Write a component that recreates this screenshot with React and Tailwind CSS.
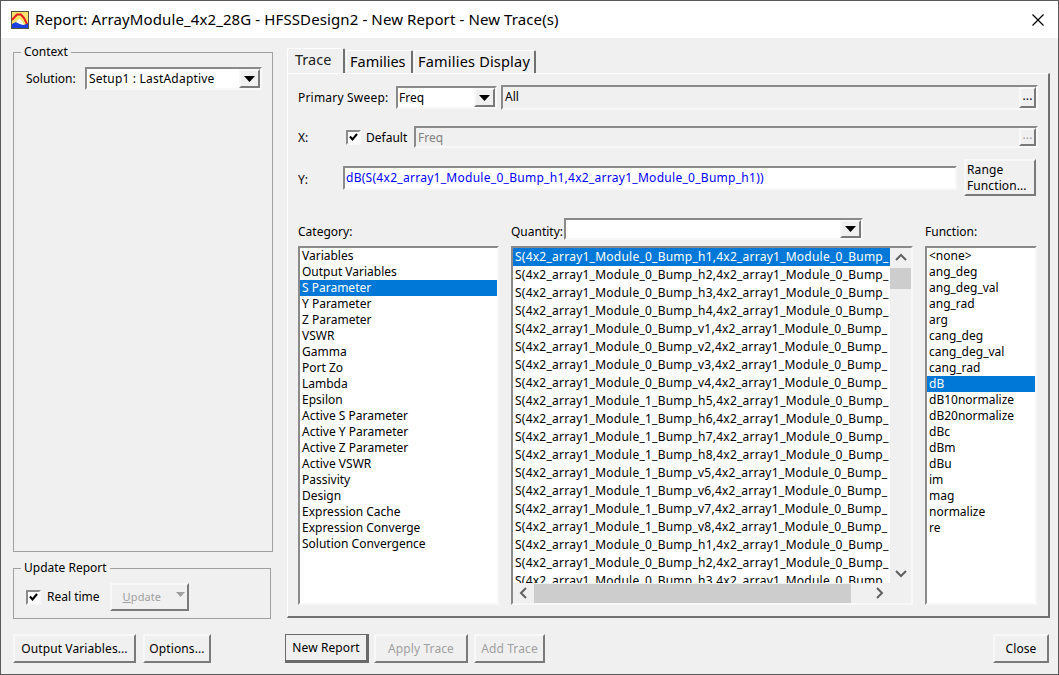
import React from "react";

const sunken = "border-2 border-t-[#8a8a8a] border-l-[#8a8a8a] border-r-[#f8f8f8] border-b-[#f8f8f8]";
const raised = "border-2 border-t-[#f8f8f8] border-l-[#f8f8f8] border-r-[#7a7a7a] border-b-[#7a7a7a] bg-[#f0f0f0]";

const categories = [
  "Variables", "Output Variables", "S Parameter", "Y Parameter", "Z Parameter", "VSWR", "Gamma", "Port Zo",
  "Lambda", "Epsilon", "Active S Parameter", "Active Y Parameter", "Active Z Parameter", "Active VSWR",
  "Passivity", "Design", "Expression Cache", "Expression Converge", "Solution Convergence",
];

const functions = [
  "<none>", "ang_deg", "ang_deg_val", "ang_rad", "arg", "cang_deg", "cang_deg_val", "cang_rad", "dB",
  "dB10normalize", "dB20normalize", "dBc", "dBm", "dBu", "im", "mag", "normalize", "re",
];

const ports = [
  "0_Bump_h1", "0_Bump_h2", "0_Bump_h3", "0_Bump_h4", "0_Bump_v1", "0_Bump_v2", "0_Bump_v3", "0_Bump_v4",
  "1_Bump_h5", "1_Bump_h6", "1_Bump_h7", "1_Bump_h8", "1_Bump_v5", "1_Bump_v6", "1_Bump_v7", "1_Bump_v8",
  "0_Bump_h1", "0_Bump_h2", "0_Bump_h3",
];

function Caret({ muted }) {
  return (
    <svg width={muted ? 9 : 11} height={muted ? 5 : 6} viewBox="0 0 11 6">
      <path d="M0 0H11L5.5 6Z" fill={muted ? "#a0a0a0" : "#000"} />
    </svg>
  );
}

function Combo({ value, className, textClass = "" }) {
  return (
    <div className={`${sunken} flex items-center bg-white ${className}`}>
      <span className={`flex-1 pl-[1px] leading-none ${textClass}`}>{value}</span>
      <div className={`${raised} flex h-full w-[21px] items-center justify-center`}>
        <Caret />
      </div>
    </div>
  );
}

function Check() {
  return (
    <div className={`${sunken} flex h-[15px] w-[15px] items-center justify-center bg-white`}>
      <svg width="9" height="8" viewBox="0 0 9 8">
        <path d="M1 3.5L3.5 6.5L8 1" fill="none" stroke="#000" strokeWidth="2" />
      </svg>
    </div>
  );
}

function Button({ children, className = "", disabled }) {
  return (
    <button className={`${raised} flex items-center justify-center tracking-[0.1px] ${disabled ? "text-[#a0a0a0]" : "text-black"} ${className}`}>
      {children}
    </button>
  );
}

function Chevron({ d }) {
  return (
    <svg width="12" height="12" viewBox="0 0 12 12">
      <path d={d} fill="none" stroke="#606060" strokeWidth="2" />
    </svg>
  );
}

function Group({ title, className, children }) {
  return (
    <div className={`relative border border-[#a0a0a0] ${className}`}>
      <span className="absolute left-[7px] top-[-9px] bg-[#f0f0f0] px-[3px] leading-[16px]">{title}</span>
      {children}
    </div>
  );
}

function Tab({ label, className }) {
  return (
    <div className={`flex items-center rounded-t-[2px] border-t border-l border-r-2 border-t-white border-l-white border-r-[#707070] ${className}`}>
      {label}
    </div>
  );
}

export default function App() {
  return (
    <div className="flex h-[675px] w-[1059px] flex-col overflow-hidden border border-[#5a5a5a] bg-[#f0f0f0] font-['Noto_Sans',sans-serif] text-[12px] text-black">
      {/* Title bar */}
      <div className="flex h-[37px] shrink-0 items-center bg-white pl-[10px] pr-[14px]">
        <svg width="18" height="18" viewBox="0 0 18 18">
          <rect width="18" height="18" fill="#55533f" />
          <rect x="1" y="1" width="16" height="16" fill="#f8e46c" />
          <path d="M1 13L5 11L9 13L13 14L17 12V17H1Z" fill="#1c3fe0" />
          <path d="M5 11L8 8L11 10L13 14L9 13Z" fill="#fff" />
          <path d="M1 9L6 3.5L10 3.5L13 7L16 13" fill="none" stroke="#e61e1e" strokeWidth="2" />
        </svg>
        <span className="ml-[6px] flex-1 text-[15px] tracking-[0.11px]">
          Report: ArrayModule_4x2_28G - HFSSDesign2 - New Report - New Trace(s)
        </span>
        <svg width="12" height="12" viewBox="0 0 12 12">
          <path d="M0.5 0.5L11.5 11.5M11.5 0.5L0.5 11.5" stroke="#000" strokeWidth="1.2" />
        </svg>
      </div>

      <div className="flex">
        {/* Left column */}
        <div className="ml-[12px] mt-[14px] flex w-[260px] flex-col">
          <Group title="Context" className="h-[500px]">
            <div className="mt-[14px] flex items-center pl-[12px]">
              <span className="w-[59px]">Solution:</span>
              <Combo value="Setup1 : LastAdaptive" textClass="pl-[2px] tracking-[0.2px]" className="h-[23px] w-[177px]" />
            </div>
          </Group>
          <Group title="Update Report" className="mt-[16px] h-[51px] w-[258px]">
            <div className="mt-[14px] flex items-center pl-[12px]">
              <Check />
              <span className="ml-[6px]">Real time</span>
              <Button disabled className="ml-[10px] h-[28px] w-[79px] !justify-start pl-[11px] text-[11px]">
                <span className="underline">U</span>
                <span>pdate</span>
                <span className="mb-[5px] ml-[15px]"><Caret muted /></span>
              </Button>
            </div>
          </Group>
        </div>

        {/* Tabs */}
        <div className="ml-[14px] mt-[10px] flex w-[763px] flex-col">
          <div className="flex h-[25px] items-end text-[14.5px]">
            <Tab label="Trace" className="h-[25px] w-[58px] pb-[2px] pl-[7px] text-[#222]" />
            <Tab label="Families" className="ml-[1px] h-[23px] w-[67px] pl-[3px]" />
            <Tab label="Families Display" className="ml-[1px] h-[23px] w-[122px] pl-[3px] tracking-[0.2px]" />
          </div>
          <div className="h-[545px] border-t border-l border-r-2 border-b-2 border-t-white border-l-white border-r-[#707070] border-b-[#707070] pl-[10px]">
            {/* Primary sweep */}
            <div className="mt-[11px] flex h-[25px] items-center">
              <span className="w-[98px] tracking-[0.2px]">Primary Sweep:</span>
              <Combo value="Freq" className="h-[23px] w-[101px]" />
              <div className={`${sunken} ml-[4px] flex h-[25px] w-[537px] items-center`}>
                <span className="flex-1 pb-[2px] pl-[2px]">All</span>
                <Button className="h-[21px] w-[17px] pb-[4px] text-[#0000ff]">...</Button>
              </div>
            </div>
            {/* X */}
            <div className="mt-[16px] flex h-[22px] items-center">
              <span className="w-[48px] pt-[2px]">X:</span>
              <Check />
              <span className="ml-[5px] w-[48px] pt-[2px]">Default</span>
              <div className={`${sunken} flex h-[22px] w-[624px] items-center text-[#808080]`}>
                <span className="flex-1 pl-[2px] pt-[2px]">Freq</span>
                <Button disabled className="h-[18px] w-[17px] pb-[4px]">...</Button>
              </div>
            </div>
            {/* Y */}
            <div className="mt-[11px] flex h-[37px] items-center">
              <span className="w-[45px] pt-[5px]">Y:</span>
              <div className={`${sunken} flex h-[24px] w-[614px] items-center bg-white pl-[1px] tracking-[0.28px] text-[#0000ff]`}>
                dB(S(4x2_array1_Module_0_Bump_h1,4x2_array1_Module_0_Bump_h1))
              </div>
              <Button className="ml-[7px] h-[37px] w-[72px] !justify-start pl-[1px] text-left leading-[16px]">
                <span>Range<br />Function...</span>
              </Button>
            </div>
            {/* List headers */}
            <div className="mt-[22px] flex h-[22px] items-center">
              <span className="w-[213px] pt-[6px]">Category:</span>
              <span className="w-[53px] pt-[6px]">Quantity:</span>
              <Combo value="" className="h-[22px] w-[299px]" />
              <span className="ml-[62px] pt-[6px]">Function:</span>
            </div>
            {/* Lists */}
            <div className="mt-[6px] flex h-[359px]">
              <div className={`${sunken} w-[201px] overflow-hidden bg-white`}>
                {categories.map((c) => (
                  <div key={c} className={`h-[16px] pl-[2px] leading-[16px] ${c === "S Parameter" ? "bg-[#0078d7] text-white" : ""}`}>
                    {c}
                  </div>
                ))}
              </div>
              <div className={`${sunken} ml-[12px] flex w-[402px] flex-col overflow-hidden bg-[#f0f0f0]`}>
                <div className="flex min-h-0 flex-1">
                  <div className="w-[377px] overflow-hidden bg-white">
                    {ports.map((p, i) => (
                      <div key={i} className={`h-[18px] whitespace-nowrap pl-[2px] leading-[18px] tracking-[0.24px] ${i === 0 ? "bg-[#0078d7] text-white" : ""}`}>
                        S(4x2_array1_Module_{p},4x2_array1_Module_0_Bump_
                      </div>
                    ))}
                  </div>
                  <div className="flex w-[21px] flex-col">
                    <div className="flex h-[20px] items-center justify-center"><Chevron d="M1 8L6 3L11 8" /></div>
                    <div className="h-[21px] bg-[#cdcdcd]" />
                    <div className="flex-1" />
                    <div className="flex h-[20px] items-center justify-center"><Chevron d="M1 4L6 9L11 4" /></div>
                  </div>
                </div>
                <div className="flex h-[20px] items-center">
                  <div className="flex w-[21px] justify-center"><Chevron d="M8 1L3 6L8 11" /></div>
                  <div className="h-[19px] w-[317px] bg-[#cdcdcd]" />
                  <div className="flex w-[40px] justify-center pl-[16px]"><Chevron d="M4 1L9 6L4 11" /></div>
                </div>
              </div>
              <div className={`${sunken} ml-[12px] w-[112px] overflow-hidden bg-white`}>
                {functions.map((f) => (
                  <div key={f} className={`h-[16px] pl-[2px] leading-[16px] ${f === "dB" ? "bg-[#0078d7] text-white" : ""}`}>
                    {f}
                  </div>
                ))}
              </div>
            </div>
          </div>
        </div>
      </div>

      {/* Bottom buttons */}
      <div className="ml-[12px] mr-[9px] mt-[15px] flex h-[29px]">
        <Button className="w-[123px]">Output Variables...</Button>
        <Button className="ml-[7px] w-[68px]">Options...</Button>
        <Button className="ml-[74px] w-[84px] !border-t !border-l !border-r-[3px] !border-b-[3px] !border-t-[#6a6a6a] !border-l-[#6a6a6a] !border-r-[#6a6a6a] !border-b-[#6a6a6a]">New Report</Button>
        <Button disabled className="ml-[5px] w-[94px]">Apply Trace</Button>
        <Button disabled className="ml-[6px] w-[71px]">Add Trace</Button>
        <Button className="ml-auto w-[56px]">Close</Button>
      </div>
    </div>
  );
}
